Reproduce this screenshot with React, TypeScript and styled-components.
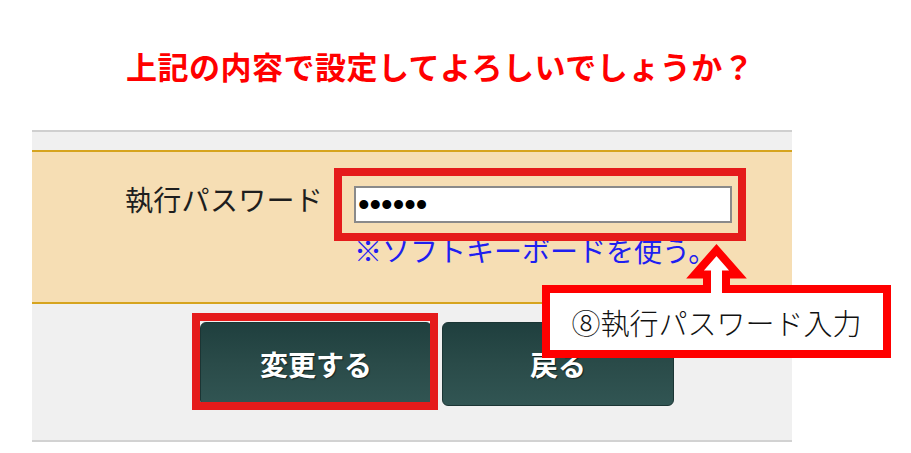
import React from "react";
import styled, { createGlobalStyle } from "styled-components";

const GlobalStyle = createGlobalStyle`
  html, body {
    margin: 0;
    padding: 0;
    background: #ffffff;
  }
  body {
    font-family: "Noto Sans CJK JP", "Noto Sans", sans-serif;
  }
`;

const Page = styled.div`
  position: relative;
  width: 911px;
  height: 453px;
  overflow: hidden;
  box-sizing: border-box;
  padding: 50px 0 0 32px;
`;

const Title = styled.h1`
  margin: 0;
  padding-left: 94px;
  font-size: 31px;
  line-height: 31px;
  letter-spacing: 0.5px;
  font-weight: 700;
  color: #ff0000;
  white-space: nowrap;
`;

const Panel = styled.section`
  width: 760px;
  margin-top: 49px;
  border-top: 2px solid #cfcfcf;
  border-bottom: 2px solid #d2d2d2;
  background: #f0f0f0;
`;

const TopBand = styled.div`
  height: 18px;
`;

const FormArea = styled.div`
  height: 150px;
  box-sizing: content-box;
  border-top: 2px solid #d6a41e;
  border-bottom: 2px solid #d6a41e;
  background: #f6deb4;
  padding-left: 93px;
  display: flex;
  align-items: flex-start;
  gap: 31px;
`;

const Label = styled.div`
  width: 198px;
  margin-top: 33px;
  font-size: 28px;
  line-height: 28px;
  letter-spacing: 0.3px;
  color: #1e1e1e;
  white-space: nowrap;
`;

const InputGroup = styled.div`
  position: relative;
  margin-top: 34px;
  display: flex;
  flex-direction: column;
`;

const PasswordInput = styled.input`
  width: 378px;
  height: 37px;
  box-sizing: border-box;
  margin: 0;
  padding: 0 2px;
  border: 2px solid #8a8a8a;
  background: #ffffff;
  font-family: "Liberation Sans", Arial, sans-serif;
  font-size: 33px;
  color: #000000;
  outline: none;
`;

const SoftKeyLink = styled.a`
  margin-top: 13px;
  font-size: 28px;
  line-height: 28px;
  color: #1f1ff0;
  text-decoration: none;
  white-space: nowrap;
  cursor: pointer;
`;

const Highlight = styled.div<{ $top: number; $left: number; $w: number; $h: number }>`
  position: absolute;
  top: ${(p) => p.$top}px;
  left: ${(p) => p.$left}px;
  width: ${(p) => p.$w}px;
  height: ${(p) => p.$h}px;
  box-sizing: border-box;
  border: 8px solid #e51b1b;
  pointer-events: none;
`;

const Footer = styled.div`
  height: 118px;
  padding-top: 18px;
  padding-left: 168px;
  display: flex;
  align-items: flex-start;
  gap: 10px;
`;

const ButtonWrap = styled.div`
  position: relative;
`;

const ActionButton = styled.button`
  width: 232px;
  height: 84px;
  margin: 0;
  padding: 0;
  border: 1px solid #1b3534;
  border-radius: 6px;
  background: linear-gradient(to bottom, #1f3f3e 0%, #2a4b49 50%, #315553 100%);
  color: #ffffff;
  font-family: "Noto Sans CJK JP", "Noto Sans", sans-serif;
  font-size: 28px;
  font-weight: 700;
  line-height: 1;
  text-shadow: 1px 1px 1px rgba(0, 0, 0, 0.55);
  cursor: pointer;
`;

const Callout = styled.div`
  position: absolute;
  left: 542px;
  top: 285px;
  width: 349px;
  height: 73px;
  box-sizing: border-box;
  border: 8px solid #ff0000;
  background: #ffffff;
  display: flex;
  align-items: center;
  justify-content: center;
  font-size: 29px;
  font-weight: 300;
  color: #111111;
  white-space: nowrap;
`;

const ArrowSvg = styled.svg`
  position: absolute;
  left: 680px;
  top: 238px;
  width: 80px;
  height: 60px;
  overflow: visible;
`;

export default function App() {
  return (
    <>
      <GlobalStyle />
      <Page>
        <Title>上記の内容で設定してよろしいでしょうか？</Title>
        <Panel>
          <TopBand />
          <FormArea>
            <Label>執行パスワード</Label>
            <InputGroup>
              <PasswordInput type="password" value="abcdef" readOnly />
              <SoftKeyLink>※ソフトキーボードを使う。</SoftKeyLink>
              <Highlight $top={-18} $left={-20} $w={412} $h={73} />
            </InputGroup>
          </FormArea>
          <Footer>
            <ButtonWrap>
              <ActionButton type="button">変更する</ActionButton>
              <Highlight $top={-9} $left={-8} $w={246} $h={97} />
            </ButtonWrap>
            <ButtonWrap>
              <ActionButton type="button">戻る</ActionButton>
            </ButtonWrap>
          </Footer>
        </Panel>
        <Callout>⑧執行パスワード入力</Callout>
        <ArrowSvg viewBox="0 0 80 60">
          <path
            d="M27 55 L27 36.5 L15 36.5 L36.5 12 L58 36.5 L46 36.5 L46 55"
            fill="#ffffff"
            stroke="#ff0000"
            strokeWidth={8}
            strokeLinejoin="miter"
            strokeMiterlimit={10}
          />
        </ArrowSvg>
      </Page>
    </>
  );
}
